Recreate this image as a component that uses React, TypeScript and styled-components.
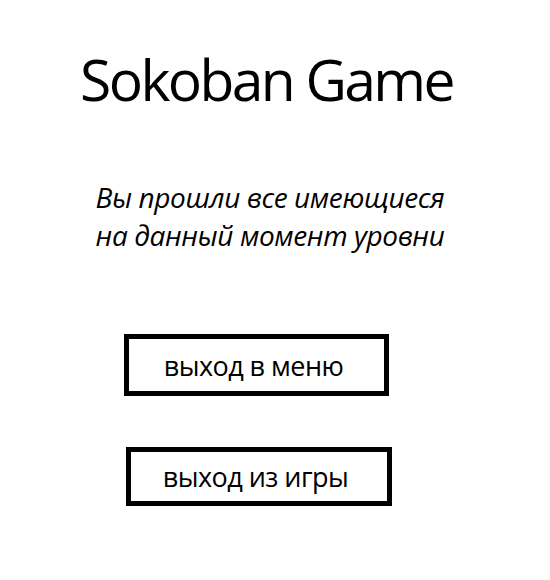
import React from "react";
import styled, { createGlobalStyle } from "styled-components";

const Global = createGlobalStyle`
  html, body { margin: 0; padding: 0; background: #ffffff; }
  body { font-family: "Open Sans", "Noto Sans", sans-serif; color: #000; }
`;

const Page = styled.main`
  width: 550px;
  height: 580px;
  display: flex;
  flex-direction: column;
  align-items: center;
  box-sizing: border-box;
  padding-top: 51px;
`;

const Title = styled.h1`
  margin: 0 17px 0 0;
  font-size: 57px;
  font-weight: 400;
  line-height: 57px;
  letter-spacing: -2.6px;
`;

const Message = styled.p`
  margin: 70px 10px 0 0;
  font-size: 28px;
  font-style: italic;
  line-height: 38px;
  text-align: center;
  letter-spacing: -0.4px;
`;

const Actions = styled.div`
  margin-top: 80px;
  display: flex;
  flex-direction: column;
  align-items: center;
  gap: 51px;
`;

const MenuButton = styled.button<{ $w: number; $h: number; $shift: number }>`
  box-sizing: border-box;
  width: ${(p) => p.$w}px;
  height: ${(p) => p.$h}px;
  margin-right: ${(p) => p.$shift}px;
  border: 5px solid #000;
  background: #fff;
  color: #000;
  font-family: "Open Sans", "Noto Sans", sans-serif;
  font-size: 27px;
  line-height: 1;
  padding: 0 6px 0 0;
  letter-spacing: -0.55px;
  cursor: pointer;
`;

export default function App() {
  return (
    <>
      <Global />
      <Page>
        <Title>Sokoban Game</Title>
        <Message>
          Вы прошли все имеющиеся
          <br />
          на данный момент уровни
        </Message>
        <Actions>
          <MenuButton $w={265} $h={62} $shift={37}>выход в меню</MenuButton>
          <MenuButton $w={266} $h={59} $shift={33}>выход из игры</MenuButton>
        </Actions>
      </Page>
    </>
  );
}
